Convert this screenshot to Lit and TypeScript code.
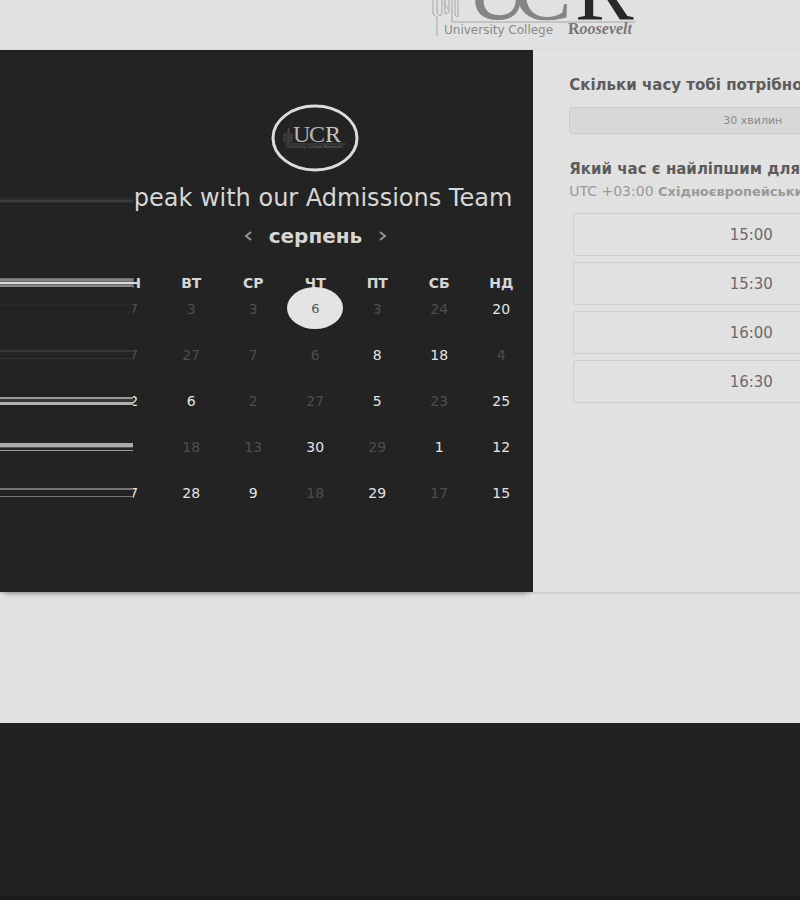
import { LitElement, html, svg, css } from "lit";
import { customElement, state } from "lit/decorators.js";
import { classMap } from "lit/directives/class-map.js";

interface Day {
  label: string;
  open?: boolean;
}

const off = (label: string): Day => ({ label });
const on = (label: string): Day => ({ label, open: true });

const WEEKDAYS = ["ПН", "ВТ", "СР", "ЧТ", "ПТ", "СБ", "НД"];

const WEEKS: Day[][] = [
  [off("27"), off("3"), off("3"), on("6"), off("3"), off("24"), on("20")],
  [off("27"), off("27"), off("7"), off("6"), on("8"), on("18"), off("4")],
  [on("22"), on("6"), off("2"), off("27"), on("5"), off("23"), on("25")],
  [off(""), off("18"), off("13"), on("30"), off("29"), on("1"), on("12")],
  [on("17"), on("28"), on("9"), off("18"), on("29"), off("17"), on("15")],
];

const TIMES = ["15:00", "15:30", "16:00", "16:30"];

// Horizontal bands in the left margin: [top, height, colour]
const BANDS: [number, number, string][] = [
  [148, 5, "#2b2b2b"],
  [150, 2, "#3c3c3c"],
  [228, 9, "#6c6c6c"],
  [229, 2, "#858585"],
  [232, 2, "#dcdcdc"],
  [235, 2, "#858585"],
  [254, 1, "#292929"],
  [263, 1, "#292929"],
  [300, 2, "#363636"],
  [308, 1, "#333333"],
  [347, 2, "#999999"],
  [349, 3, "#363636"],
  [352, 3, "#b0b0b0"],
  [393, 4, "#aaaaaa"],
  [397, 1, "#555555"],
  [400, 1, "#999999"],
  [438, 2, "#747474"],
  [446, 1, "#747474"],
];

@customElement("app-root")
export class AppRoot extends LitElement {
  @state() private picked = "0-3";

  static styles = css`
    :host {
      display: block;
      min-height: 100vh;
      overflow: hidden;
      background: #e1e1e1;
      color: #5c5c5c;
      font-family: "DejaVu Sans", "Noto Sans", sans-serif;
    }
    * {
      box-sizing: border-box;
    }
    button {
      font: inherit;
      color: inherit;
      background: none;
      border: 0;
      padding: 0;
      margin: 0;
      cursor: pointer;
    }
    .top {
      height: 50px;
      padding-left: 54%;
      border-bottom: 1px solid #dcdcdc;
    }
    .logo {
      display: block;
    }
    .serif {
      font-family: "Liberation Serif", serif;
    }
    .humanist {
      font-family: "DejaVu Sans", sans-serif;
    }
    .card {
      display: grid;
      grid-template-columns: 66.66% 403px;
      min-height: 542px;
      box-shadow: 0 1px 2px #bdbdbd;
    }
    .month {
      display: grid;
      grid-template-columns: 25% 1fr;
      background: #232323;
      color: #d6d6d6;
      box-shadow: 0 6px 6px -5px #8a8a8a;
    }
    .bands {
      display: block;
      width: 100%;
      height: 542px;
    }
    .calendar {
      display: flex;
      flex-direction: column;
      align-items: flex-end;
      overflow: hidden;
      padding: 54px 1px 0 0;
    }
    .badge {
      display: block;
      margin-right: 173px;
    }
    .title {
      margin: 11px 20px 0 0;
      font-size: 24px;
      line-height: 30px;
      font-weight: 400;
      white-space: nowrap;
    }
    .switch {
      display: flex;
      align-items: center;
      gap: 16px;
      height: 32px;
      margin: 7px 144px 0 0;
    }
    .name {
      margin: 0;
      font-size: 20px;
      line-height: 32px;
    }
    .arrow {
      width: 10px;
      height: 20px;
    }
    .arrow svg {
      display: block;
      margin: auto;
    }
    .grid {
      width: 434px;
      flex: none;
      margin-top: 19px;
      table-layout: fixed;
      border-collapse: collapse;
    }
    .grid th {
      height: 24px;
      padding: 0;
      font-size: 14px;
      line-height: 24px;
    }
    .grid td {
      height: 46px;
      padding: 0;
      vertical-align: top;
    }
    .day {
      position: relative;
      display: block;
      width: 100%;
      height: 28px;
      font-size: 14px;
      line-height: 28px;
      text-align: center;
      color: #e4e4e4;
    }
    .day:disabled {
      color: #4d4d4d;
      cursor: default;
    }
    .day.picked {
      color: #555555;
      font-size: 13px;
    }
    .picked::before {
      content: "";
      position: absolute;
      inset: -8px 3px -6px;
      border-radius: 50%;
      background: #e4e4e4;
    }
    .num {
      position: relative;
    }
    .slots {
      padding: 23px 0 0 36px;
    }
    .question {
      margin: 0;
      font-size: 15px;
      line-height: 24px;
      white-space: nowrap;
    }
    .length {
      display: block;
      width: 100%;
      height: 27px;
      margin: 10px 0 23px;
      border: 1px solid #cbcbcb;
      border-radius: 3px;
      background: #d8d8d8;
      color: #8a8a8a;
      font-size: 11px;
    }
    .zone {
      margin: 0 0 11px;
      font-size: 14px;
      line-height: 20px;
      color: #999999;
      white-space: nowrap;
    }
    .zone b {
      font-size: 13px;
    }
    .times {
      display: grid;
      gap: 6px;
      margin: 0;
      padding: 0 7px 0 4px;
      list-style: none;
    }
    .time {
      display: block;
      width: 100%;
      height: 43px;
      border: 1px solid #cfcfcf;
      border-radius: 3px;
      color: #6b6b6b;
      font-size: 15px;
    }
    .foot {
      height: 177px;
      margin-top: 131px;
      background: #222222;
      border-bottom: 4px solid #1c181b;
    }
  `;

  private logo() {
    return html`
      <svg class="logo" width="210" height="40" viewBox="0 0 210 40" role="img" aria-label="University College Roosevelt">
        <g fill="none" stroke="#a6a6a6" stroke-width="1">
          <path d="M1 0V14L5 17V36M5 0V13L8 16L10 13V0M13 0V14L17 12V0M20 0V22H203M23 0V15L26 17V0M12 3L16 9" />
        </g>
        <g class="serif" font-size="88">
          <text x="34" y="19" fill="#858585">U</text>
          <text x="81" y="19" fill="#858585">C</text>
          <text x="143" y="19" fill="#282828">R</text>
        </g>
        <text class="humanist" x="12" y="34" font-size="12" fill="#8a8a8a">University College</text>
        <text class="serif" x="136" y="34" font-size="16" font-weight="700" fill="#777777">R<tspan font-style="italic">oosevelt</tspan></text>
      </svg>
    `;
  }

  private badge() {
    return html`
      <svg class="badge" width="88" height="68" viewBox="0 0 88 68" role="img" aria-label="UCR">
        <ellipse cx="44" cy="34" rx="42" ry="32" fill="none" stroke="#dcdcdc" stroke-width="3" />
        <path d="M13 38V30H15V38M17 39V26L18 24V39M20 38V30H21V38M14 40H75" fill="none" stroke="#4c4c4c" />
        <g class="serif" font-size="24" fill="#b4b4b4">
          <text x="22" y="38">U</text>
          <text x="38" y="38">C</text>
          <text x="54" y="38" fill="#c4c4c4">R</text>
        </g>
        <text class="humanist" x="15" y="44" font-size="4" fill="#777777">University College Roosevelt</text>
      </svg>
    `;
  }

  private arrow(label: string, d: string) {
    return html`
      <button class="arrow" aria-label=${label}>
        <svg width="8" height="10" viewBox="0 0 8 10">
          <path d=${d} fill="none" stroke="#949494" stroke-width="2" />
        </svg>
      </button>
    `;
  }

  private day(day: Day, key: string) {
    if (!day.label) return html`<td></td>`;
    const picked = key === this.picked;
    return html`
      <td>
        <button
          class=${classMap({ day: true, picked })}
          ?disabled=${!day.open}
          aria-pressed=${picked}
          @click=${() => (this.picked = key)}
        ><span class="num">${day.label}</span></button>
      </td>
    `;
  }

  render() {
    return html`
      <header class="top">${this.logo()}</header>
      <main class="card">
        <section class="month">
          <svg class="bands" viewBox="0 0 133 542" preserveAspectRatio="none" aria-hidden="true">
            ${BANDS.map(([y, h, fill]) => svg`<rect x="0" y=${y} width="133" height=${h} fill=${fill} />`)}
          </svg>
          <div class="calendar">
            ${this.badge()}
            <h1 class="title">peak with our Admissions Team</h1>
            <div class="switch">
              ${this.arrow("Попередній місяць", "M7 1L2 5L7 9")}
              <h2 class="name">серпень</h2>
              ${this.arrow("Наступний місяць", "M1 1L6 5L1 9")}
            </div>
            <table class="grid">
              <thead>
                <tr>${WEEKDAYS.map((d) => html`<th scope="col">${d}</th>`)}</tr>
              </thead>
              <tbody>
                ${WEEKS.map((w, r) => html`<tr>${w.map((d, c) => this.day(d, `${r}-${c}`))}</tr>`)}
              </tbody>
            </table>
          </div>
        </section>
        <section class="slots">
          <h2 class="question">Скільки часу тобі потрібно?</h2>
          <button class="length">30 хвилин</button>
          <h2 class="question">Який час є найліпшим для тебе?</h2>
          <p class="zone">UTC +03:00 <b>Східноєвропейський час</b></p>
          <ul class="times">
            ${TIMES.map((t) => html`<li><button class="time">${t}</button></li>`)}
          </ul>
        </section>
      </main>
      <footer class="foot"></footer>
    `;
  }
}
